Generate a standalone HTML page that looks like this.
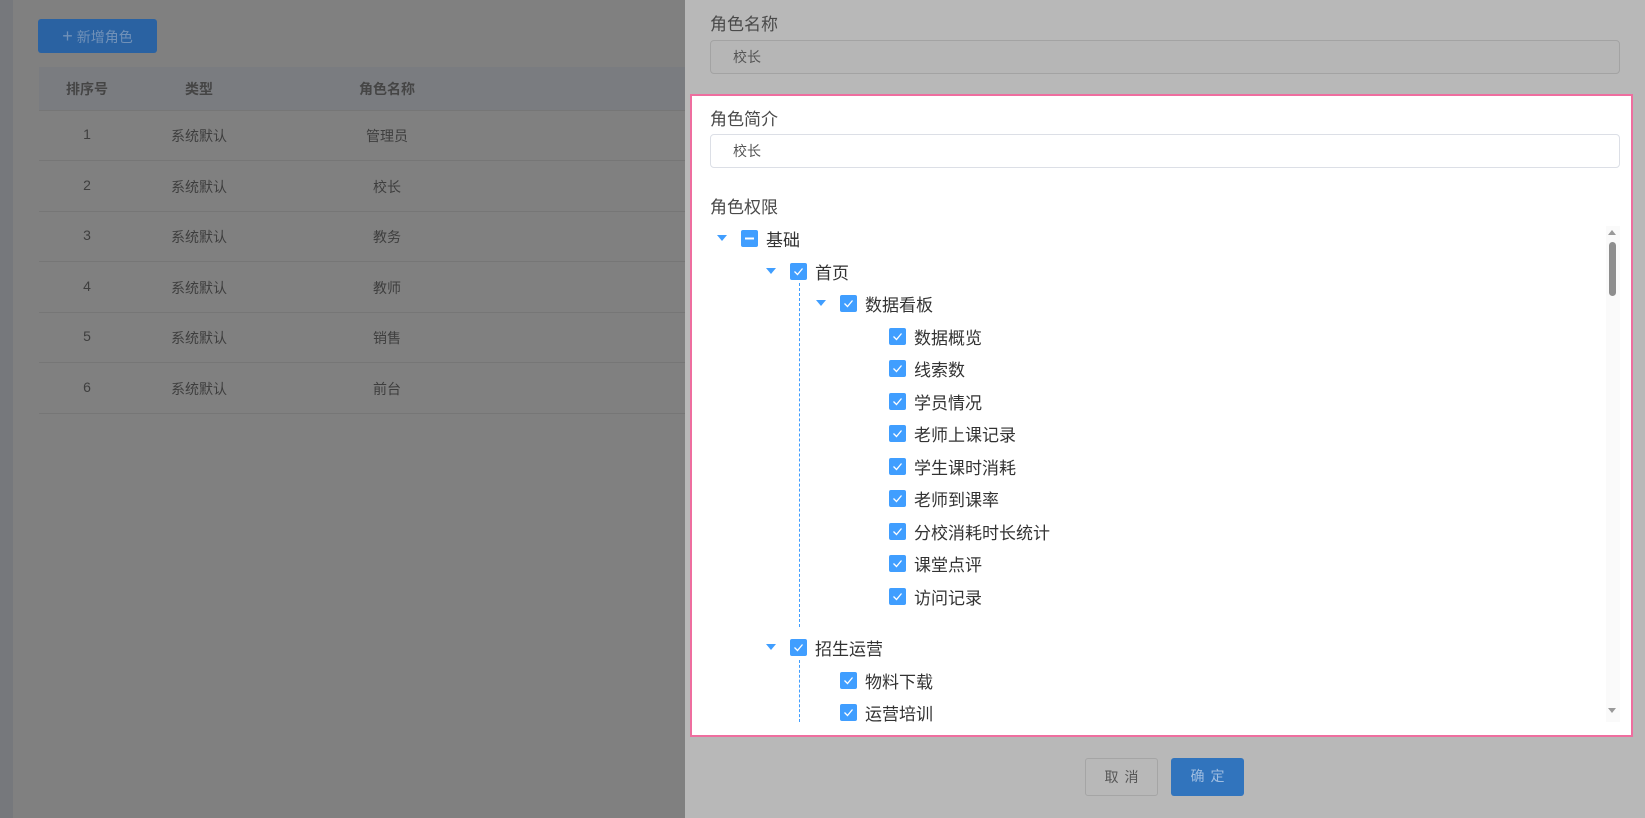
<!DOCTYPE html>
<html><head><meta charset="utf-8"><style>
*{margin:0;padding:0;box-sizing:border-box}
body{width:1645px;height:818px;overflow:hidden;position:relative;background:#808080;font-family:"Liberation Sans","Noto Sans CJK SC",sans-serif}
.abs{position:absolute}
.strip{left:0;top:0;width:13px;height:818px;background:#76787c}
.btn-add{left:38px;top:19px;width:119px;height:34px;background:#2a62a2;border-radius:3px;color:#7191b8;font-size:14px;line-height:34px;text-align:center}
.thead{left:39px;top:67px;width:646px;height:43px;background:#7a7c80}
.cell{position:absolute;font-size:14px;color:#3e3e3e;transform:translateX(-50%);white-space:nowrap}
.line{position:absolute;left:39px;width:646px;height:1px;background:#767676}
.panel{left:685px;top:0;width:960px;height:818px;background:#b8b8b8}
.lbl{position:absolute;font-size:17px;color:#4a4a4a}
.inp{position:absolute;left:710px;width:910px;height:34px;border-radius:4px;font-size:14px;padding-left:22px;line-height:32px;color:#555}
.hl{left:690px;top:94px;width:943px;height:643px;background:#fff;border:2px solid #ee6e9f}
.cb{position:absolute;width:17px;height:17px;background:#409eff;border-radius:2px}
.cb svg{position:absolute;left:0;top:0}
.tx{position:absolute;font-size:17px;color:#333;white-space:nowrap}
.arr{position:absolute;width:0;height:0;border-left:5px solid transparent;border-right:5px solid transparent;border-top:6px solid #409eff}
.dash{position:absolute;left:799px;width:0;border-left:1px dashed #409eff}
.b{position:absolute;top:758px;width:73px;height:38px;border-radius:3px;font-size:14px;line-height:36px;text-align:center;letter-spacing:6px;text-indent:6px}
</style></head><body>
<div class="abs strip"></div>
<div class="abs btn-add"><span style="font-size:18px">+</span> 新增角色</div>
<div class="abs thead"></div>
<div class="cell" style="left:87px;top:79px;font-weight:bold;color:#454545">排序号</div>
<div class="cell" style="left:199px;top:79px;font-weight:bold;color:#454545">类型</div>
<div class="cell" style="left:387px;top:79px;font-weight:bold;color:#454545">角色名称</div>
<div class="line" style="top:110px"></div>
<div class="cell" style="left:87px;top:126px">1</div><div class="cell" style="left:199px;top:126px">系统默认</div><div class="cell" style="left:387px;top:126px">管理员</div>
<div class="line" style="top:160px"></div>
<div class="cell" style="left:87px;top:177px">2</div><div class="cell" style="left:199px;top:177px">系统默认</div><div class="cell" style="left:387px;top:177px">校长</div>
<div class="line" style="top:211px"></div>
<div class="cell" style="left:87px;top:227px">3</div><div class="cell" style="left:199px;top:227px">系统默认</div><div class="cell" style="left:387px;top:227px">教务</div>
<div class="line" style="top:261px"></div>
<div class="cell" style="left:87px;top:278px">4</div><div class="cell" style="left:199px;top:278px">系统默认</div><div class="cell" style="left:387px;top:278px">教师</div>
<div class="line" style="top:312px"></div>
<div class="cell" style="left:87px;top:328px">5</div><div class="cell" style="left:199px;top:328px">系统默认</div><div class="cell" style="left:387px;top:328px">销售</div>
<div class="line" style="top:362px"></div>
<div class="cell" style="left:87px;top:379px">6</div><div class="cell" style="left:199px;top:379px">系统默认</div><div class="cell" style="left:387px;top:379px">前台</div>
<div class="line" style="top:413px"></div>

<div class="abs panel"></div>
<div class="lbl" style="left:710px;top:10px">角色名称</div>
<div class="inp" style="top:40px;background:#b6b6b6;border:1px solid #a3a3a3">校长</div>
<div class="abs hl"></div>
<div class="lbl" style="left:710px;top:105px">角色简介</div>
<div class="inp" style="top:134px;background:#fff;border:1px solid #dcdfe6">校长</div>
<div class="lbl" style="left:710px;top:193px">角色权限</div>

<div class="abs" style="left:1606px;top:226px;width:14px;height:496px;background:#fafafa"></div>
<div class="abs" style="left:1609px;top:242px;width:7px;height:54px;background:#8e8e8e;border-radius:4px"></div>
<div class="abs" style="left:1608px;top:230px;border-left:4px solid transparent;border-right:4px solid transparent;border-bottom:5px solid #999"></div>
<div class="abs" style="left:1608px;top:708px;border-left:4px solid transparent;border-right:4px solid transparent;border-top:5px solid #999"></div>

<div class="dash" style="top:283px;height:344px"></div>
<div class="dash" style="top:660px;height:62px"></div>

<div id="tree"></div>
<div class="b" style="left:1085px;border:1px solid #a5a5a5;color:#555;background:#b8b8b8">取消</div>
<div class="b" style="left:1171px;background:#3174bd;color:#9fbde0">确定</div>
<script>
var rows=[
[0,240,'基础',1,1],[1,273,'首页',1,0],[2,305,'数据看板',1,0],
[3,338,'数据概览'],[3,370,'线索数'],[3,403,'学员情况'],[3,435,'老师上课记录'],[3,468,'学生课时消耗'],[3,500,'老师到课率'],[3,533,'分校消耗时长统计'],[3,565,'课堂点评'],[3,598,'访问记录'],
[1,649,'招生运营',1,0],[2,682,'物料下载'],[2,714,'运营培训']];
var h='';
rows.forEach(function(r){
var cbx=[741,790,840,889][r[0]];var y=r[1]-2;
if(r[3]) h+='<div class="arr" style="left:'+(cbx-24)+'px;top:'+(y-3)+'px"></div>';
var ic=r[4]?'<svg width="17" height="17"><rect x="4" y="7.5" width="9" height="2" fill="#fff"/></svg>':'<svg width="17" height="17"><path d="M4.5 8.5 L7.5 11.5 L12.5 5.5" stroke="#fff" stroke-width="1.3" fill="none"/></svg>';
var clip=y>700?'clip-path:inset(0 0 '+(y+9-722)+'px 0);':'';
h+='<div class="cb" style="left:'+cbx+'px;top:'+(y-8)+'px;'+clip+'">'+ic+'</div>';
h+='<div class="tx" style="left:'+(cbx+25)+'px;top:'+(y-12)+'px;'+(y>700?'height:'+(722-y+12)+'px;overflow:hidden;':'')+'">'+r[2]+'</div>';
});
document.getElementById('tree').innerHTML=h;
</script>
</body></html>
